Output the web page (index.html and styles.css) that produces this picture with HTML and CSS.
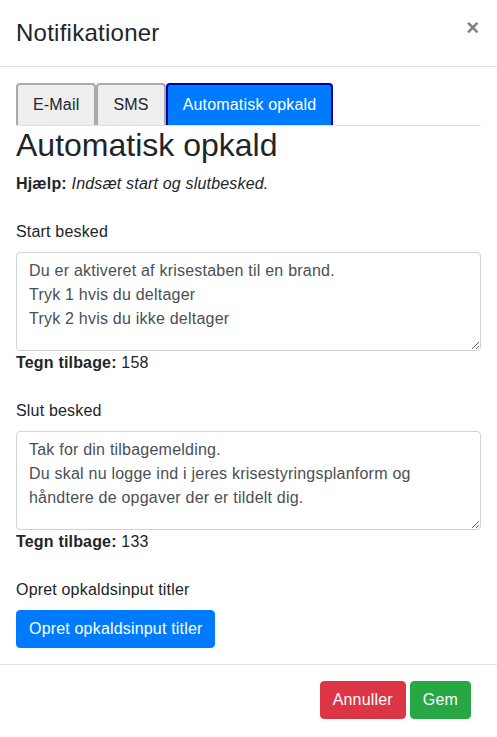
FILE: index.html
```html
<!DOCTYPE html>
<html lang="da">
<head>
<meta charset="utf-8">
<title>Notifikationer</title>
<link rel="stylesheet" href="styles.css">
</head>
<body>
<div class="modal">
  <div class="modal-header">
    <h5 class="modal-title">Notifikationer</h5>
    <button type="button" class="close" aria-label="Luk">×</button>
  </div>
  <div class="modal-body">
    <ul class="tabs">
      <li class="tab">E-Mail</li>
      <li class="tab">SMS</li>
      <li class="tab active">Automatisk opkald</li>
    </ul>
    <h2 class="section-title">Automatisk opkald</h2>
    <p class="help"><strong>Hjælp:</strong> <em>Indsæt start og slutbesked.</em></p>

    <div class="field">
      <label class="field-label">Start besked</label>
      <textarea class="input">Du er aktiveret af krisestaben til en brand.
Tryk 1 hvis du deltager
Tryk 2 hvis du ikke deltager</textarea>
      <p class="counter"><strong>Tegn tilbage:</strong> 158</p>
    </div>

    <div class="field">
      <label class="field-label">Slut besked</label>
      <textarea class="input">Tak for din tilbagemelding.
Du skal nu logge ind i jeres krisestyringsplanform og håndtere de opgaver der er tildelt dig.</textarea>
      <p class="counter"><strong>Tegn tilbage:</strong> 133</p>
    </div>

    <div class="field last">
      <label class="field-label">Opret opkaldsinput titler</label>
      <button type="button" class="btn btn-primary">Opret opkaldsinput titler</button>
    </div>
  </div>
  <div class="modal-footer">
    <button type="button" class="btn btn-danger">Annuller</button>
    <button type="button" class="btn btn-success">Gem</button>
  </div>
</div>
</body>
</html>
```

FILE: styles.css
```css
* { box-sizing: border-box; }

html, body {
  margin: 0;
  padding: 0;
  background: #fff;
}

body {
  font-family: "Liberation Sans", Arial, Helvetica, sans-serif;
  font-size: 16px;
  line-height: 24px;
  letter-spacing: 0.18px;
  color: #212529;
}

.modal {
  width: 100%;
  background: #fff;
}

.modal-header {
  display: flex;
  align-items: flex-start;
  justify-content: space-between;
  padding: 18px 16px 18px 16px;
  border-bottom: 1px solid #dee2e6;
}

.modal-title {
  margin: 0;
  font-size: 24px;
  font-weight: 400;
  line-height: 30px;
  letter-spacing: 0.25px;
  color: #212529;
}

.close {
  margin: -1px 2px 0 0;
  padding: 0;
  border: 0;
  background: transparent;
  font-family: "Liberation Sans", Arial, sans-serif;
  font-size: 22px;
  font-weight: 700;
  line-height: 22px;
  color: #808080;
  cursor: pointer;
}

.modal-body {
  padding: 16px;
}

.tabs {
  display: flex;
  margin: 0;
  padding: 0;
  list-style: none;
  border-bottom: 1px solid #dee2e6;
}

.tab {
  padding: 8px 15px;
  line-height: 24px;
  border: 2px solid #a9a9a9;
  border-bottom: 0;
  border-radius: 4px 4px 0 0;
  background: #eeeeee;
  color: #212529;
}

.tab.active {
  background: #007bff;
  border-color: #0000a0;
  color: #fff;
}

.section-title {
  margin: 0 0 8px;
  font-size: 32px;
  font-weight: 400;
  line-height: 38px;
  letter-spacing: 0;
  color: #212529;
}

.help {
  margin: 0 0 24px;
}

.help strong,
.counter strong {
  font-weight: 700;
}

.field {
  margin-bottom: 24px;
}

.field.last {
  margin-bottom: 0;
}

.field-label {
  display: block;
  margin-bottom: 8px;
}

.input {
  display: block;
  width: 100%;
  height: 99px;
  margin: 0;
  padding: 6px 12px;
  font-family: inherit;
  font-size: 16px;
  line-height: 24px;
  letter-spacing: 0.22px;
  color: #495057;
  background: #fff;
  border: 1px solid #ced4da;
  border-radius: 4px;
  resize: vertical;
}

.counter {
  margin: 0;
}

.btn {
  display: inline-block;
  padding: 6px 12px;
  font-family: inherit;
  font-size: 16px;
  line-height: 24px;
  font-weight: 400;
  letter-spacing: inherit;
  color: #fff;
  border: 1px solid transparent;
  border-radius: 4px;
  cursor: pointer;
}

.btn-primary {
  background: #007bff;
  border-color: #007bff;
}

.btn-danger {
  background: #dc3545;
  border-color: #dc3545;
}

.btn-success {
  background: #28a745;
  border-color: #28a745;
}

.modal-footer {
  display: flex;
  justify-content: flex-end;
  gap: 4px;
  padding: 16px 26px 16px 16px;
  border-top: 1px solid #dee2e6;
}
```
